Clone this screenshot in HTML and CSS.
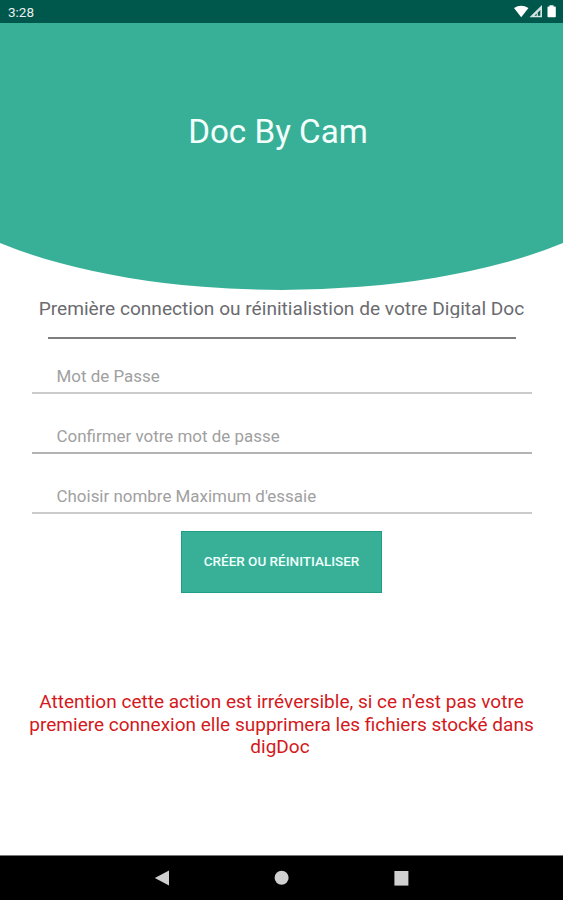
FILE: index.html
```html
<!DOCTYPE html>
<html lang="fr">
<head>
<meta charset="utf-8">
<title>Doc By Cam</title>
<link rel="stylesheet" href="styles.css">
</head>
<body>
<div class="screen">
  <div class="status">
    <span class="clock">3:28</span>
    <svg class="status-icons" width="43" height="14" viewBox="0 0 43 14">
      <path d="M0 3Q7-1.500 14.500 3L7.200 12.300Z" fill="#fff"/>
      <path d="M28 0V12.300H15.500Z" fill="#d5e4e1"/>
      <path d="M26.300 5V10.800H23.800V7.600Z" fill="#00574b"/>
      <path d="M22.600 8.600V10.800H20.500Z" fill="#00574b"/>
      <path d="M34.300 1.500H35.500V.3H39.500V1.500H41Q41.800 1.500 41.800 2.500V11.500Q41.800 12.300 41 12.300H34.300Q33.500 12.300 33.500 11.500V2.500Q33.500 1.500 34.300 1.500Z" fill="#fff"/>
    </svg>
  </div>
  <header class="hero">
    <svg class="curve" viewBox="0 0 563 268" preserveAspectRatio="none"><path d="M0 0H563V220A380 143 0 0 1 0 220Z" fill="#38b098"/></svg>
    <h1 class="title">Doc By Cam</h1>
  </header>
  <main class="content">
    <p class="subtitle">Première connection ou réinitialistion de votre Digital Doc</p>
    <div class="rule"></div>
    <form class="form">
      <div class="field">Mot de Passe</div>
      <div class="field mid">Confirmer votre mot de passe</div>
      <div class="field">Choisir nombre Maximum d'essaie</div>
      <button class="submit" type="button">CRÉER OU RÉINITIALISER</button>
    </form>
    <p class="warning">Attention cette action est irréversible, si ce n’est pas votre<br>premiere connexion elle supprimera les fichiers stocké dans<br><span class="last">digDoc</span></p>
  </main>
  <nav class="navbar">
    <svg width="16" height="16" viewBox="0 0 16 16"><path d="M.8 8L15 .5V15.500Z" fill="#d0d0d0"/></svg>
    <svg width="16" height="16" viewBox="0 0 16 16"><circle cx="7.600" cy="7.700" r="7" fill="#d0d0d0"/></svg>
    <svg width="16" height="16" viewBox="0 0 16 16"><path d="M.4 1H14.400V15.600H.4Z" fill="#d0d0d0"/></svg>
  </nav>
</div>
</body>
</html>
```
FILE: styles.css
```css
* { box-sizing: border-box; }
body { margin: 0; font-family: Roboto, "Liberation Sans", sans-serif; background: #fff; }
h1, p { margin: 0; font-weight: 400; }
.screen { width: 563px; height: 900px; display: flex; flex-direction: column; overflow: hidden; }
.status { height: 23px; background: #00574b; display: flex; justify-content: space-between; padding: 4px 6px 0 8px; flex: none; }
.status-icons { margin-top: 1px; }
.clock { color: #e8f1ef; font-size: 13.500px; line-height: 17px; font-weight: 400; }
.hero { height: 267px; display: grid; flex: none; }
.curve { grid-area: 1 / 1; width: 563px; height: 268px; }
.title { grid-area: 1 / 1; text-align: center; color: #f4fffc; font-size: 33.200px; line-height: 40px; padding-top: 89px; padding-right: 7px; z-index: 1; }
.content { flex: 1; display: flex; flex-direction: column; align-items: center; }
.subtitle { height: 21px; margin-top: 7px; overflow: hidden; font-size: 19.130px; line-height: 24px; color: #6b6b6f; white-space: nowrap; }
.rule { width: 468px; height: 2px; margin-top: 19px; background: #807d80; }
.form { width: 500px; display: flex; flex-direction: column; align-items: center; margin-top: 15px; }
.field { width: 100%; height: 40px; margin-bottom: 20px; padding: 12px 25px 0; border-bottom: 2px solid #cbcbcb; color: #a0a0a0; font-size: 16.950px; line-height: 20px; white-space: nowrap; }
.mid { border-bottom-color: #b4b4b4; }
.submit { width: 201px; height: 62px; margin: -3px 0 0; padding: 0 0 2px; border: 1px solid #219f86; background: #38b098; color: #f0fffc; font: 500 13.500px/20px Roboto, "Liberation Sans", sans-serif; white-space: nowrap; }
.warning { width: 540px; margin-top: 98px; text-align: center; color: #d3191c; font-size: 19.030px; line-height: 22.500px; white-space: nowrap; }
.last { padding-right: 3px; }
.navbar { height: 45px; flex: none; background: #000; border-top: 1px solid #777; display: flex; justify-content: center; gap: 104px; padding-top: 14px; }
```
